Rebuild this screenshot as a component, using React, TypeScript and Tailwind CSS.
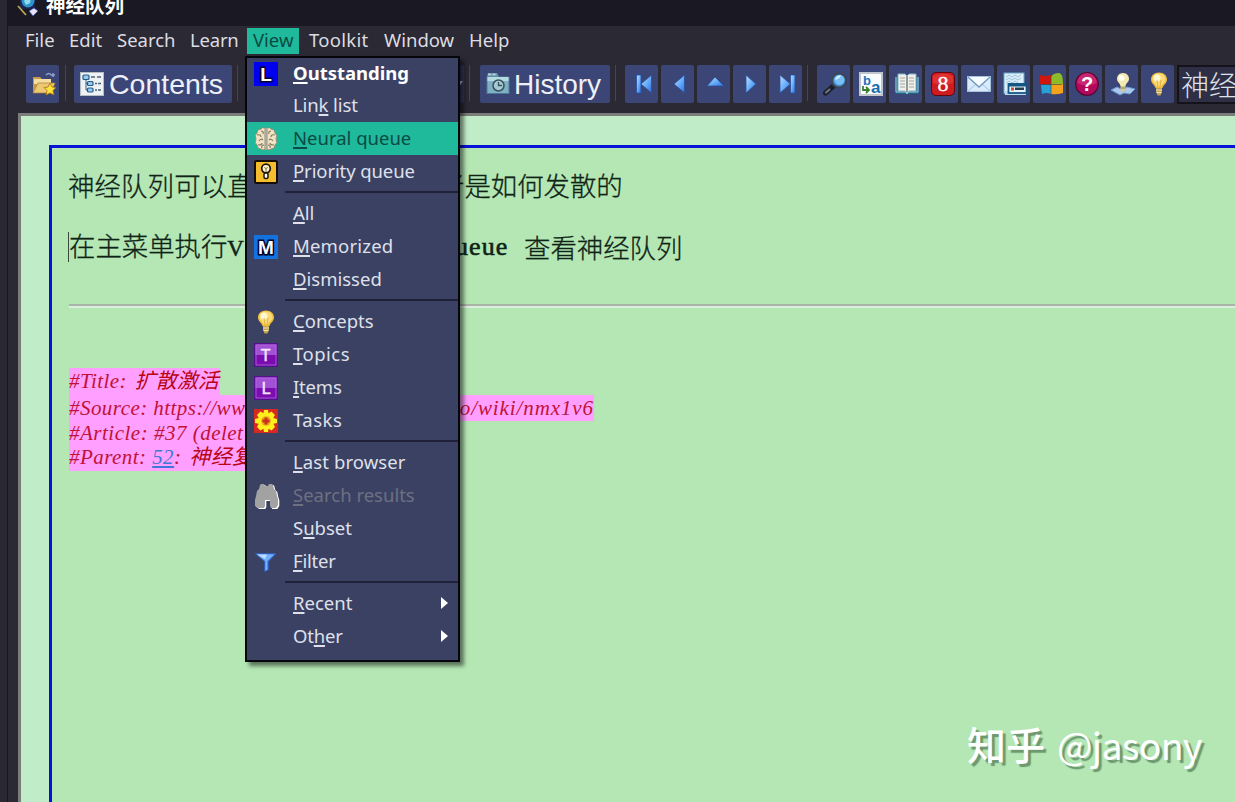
import type { ReactNode } from "react";

const UI = "font-['Noto_Sans','Open_Sans',sans-serif]";
const CJK = "font-['Noto_Sans_CJK_SC',sans-serif]";

function Svg({ children, size = "size-6" }: { children: ReactNode; size?: string }) {
  return (
    <svg viewBox="0 0 24 24" className={`${size} block shrink-0`}>
      {children}
    </svg>
  );
}

const Bulb = () => (
  <Svg>
    <path d="M12 .5C7 .5 4 3.500 4 7.500c0 4 3.500 5 4.500 8.500h7c1-3.500 4.500-4.500 4.500-8.500 0-4-3-7-8-7z" fill="#f0bc3e" />
    <path d="M12 1.500C8 1.500 5.500 4 5.500 7.500c0 3 3 4 4 7h4.500c1-3 4.500-4 4.500-7s-2.500-6-6.500-6z" fill="#fadb78" />
    <circle cx="10" cy="6" r="3.500" fill="#fff8cf" />
    <path d="M10 8l1 7M14 8l-1 7" stroke="#e0a834" strokeWidth=".8" fill="none" />
    <path d="M9 16h6v4l-1.500 3.500h-3L9 20z" fill="#c4a24e" />
    <path d="M9 18h6M9.500 20.500h5" stroke="#ece5bd" />
  </Svg>
);

const Folder = () => (
  <Svg>
    <path d="M1 5h7l2 2h9v14H1z" fill="#c79b48" />
    <path d="M2 7h17v5H2z" fill="#f5dfa0" />
    <path d="M6 11h17l-4 10H1z" fill="#edc873" stroke="#a97b32" strokeWidth=".7" />
    <path d="M14 3q3-3 5 0M19 3h4M21 1v4" stroke="#8fa2cf" strokeWidth="1.500" fill="none" />
    <path d="M18 11l2 4 4 .5-3 3 1 4.500-4-2-4 2 1-4.500-3-3 4-.5z" fill="#ffe23b" stroke="#a56d11" strokeWidth=".8" />
  </Svg>
);

const Tree = () => (
  <Svg>
    <rect x=".5" y=".5" width="23" height="23" fill="#eef2f5" stroke="#b4bcc5" />
    <path d="M6 5v13M6 11.500h4M6 18h4" stroke="#315f87" fill="none" />
    <g fill="#9cc9e9" stroke="#205b8d" strokeWidth="1.200">
      <rect x="3" y="3" width="6" height="4.500" rx="1" />
      <rect x="7.500" y="9.500" width="5.500" height="4" rx="1" />
      <rect x="7.500" y="16" width="5.500" height="4" rx="1" />
    </g>
    <path d="M11 5h4m2 0h4M15 11.500h2m1 0h3M15 18h2m1 0h3" stroke="#4e6473" strokeWidth="1.600" />
  </Svg>
);

const HistoryIcon = () => (
  <Svg>
    <path d="M1 5l1-4h9l2 4z" fill="#7399ae" />
    <path d="M2 2.500h9" stroke="#b5d5dd" strokeWidth="1.500" strokeDasharray="3 1.500" />
    <rect x="1" y="5" width="22" height="16.500" fill="#7fb0c4" stroke="#4c7b95" />
    <path d="M1.500 5h21v4h-21z" fill="#b5dbe0" />
    <circle cx="12.500" cy="13.500" r="5.500" fill="#a4cbd4" stroke="#38505e" strokeWidth="1.500" />
    <path d="M12.500 10v3.500H16" stroke="#38505e" strokeWidth="1.300" fill="none" />
  </Svg>
);

function Nav({ kind }: { kind: string }) {
  return (
    <Svg>
      <defs>
        <linearGradient id="navBlue" x1="0" y1="0" x2="1" y2="1">
          <stop offset="0" stopColor="#bfe2ff" />
          <stop offset=".5" stopColor="#6cb0fa" />
          <stop offset="1" stopColor="#2c6fdc" />
        </linearGradient>
      </defs>
      <g fill="url(#navBlue)" stroke="#284f9d" strokeWidth=".8">
        {kind === "first" && <><rect x="5.500" y="3" width="4.500" height="18" /><path d="M20.500 3v18L10 12z" /></>}
        {kind === "prev" && <path d="M17.500 3v18L7 12z" />}
        {kind === "up" && <path d="M4 14l8-9 9 9z" />}
        {kind === "next" && <path d="M7 3v18l10-9z" />}
        {kind === "last" && <><path d="M5 3v18l10.500-9z" /><rect x="15.500" y="3" width="4.500" height="18" /></>}
      </g>
    </Svg>
  );
}

const Magnifier = () => (
  <Svg>
    <path d="M2.500 21l8-7" stroke="#1b2028" strokeWidth="5" strokeLinecap="round" />
    <path d="M3 20.500l3.500-3" stroke="#707884" strokeWidth="2" strokeLinecap="round" />
    <circle cx="16" cy="8.500" r="7" fill="#4590d8" stroke="#3b4656" strokeWidth="2" />
    <circle cx="16.500" cy="8" r="5" fill="#77bff4" />
    <path d="M12 8q0-4 6-5-1 4-6 5z" fill="#d3efff" />
  </Svg>
);

const Translate = () => (
  <Svg>
    <rect x="1" y="1" width="22" height="22" fill="#f9fbfd" stroke="#bfc4cd" strokeWidth="2" />
    <text x="4" y="12.500" fill="#2475b7" fontSize="13" fontWeight="700" fontFamily="Liberation Sans">b</text>
    <text x="12" y="21" fill="#176fae" fontSize="17" fontWeight="700" fontFamily="Liberation Sans">a</text>
    <path d="M4 14v4h5m-2-3l3 3-3 3" stroke="#397f30" strokeWidth="1.800" fill="none" />
  </Svg>
);

const Book = () => (
  <Svg>
    <path d="M0 5h24v17H0z" fill="#226486" />
    <path d="M3 2h7l2 2 2-2h7v17h-7l-2 2-2-2H3z" fill="#f1f0e8" stroke="#83b4cc" />
    <path d="M12 4v16" stroke="#5f6a70" strokeWidth="1.300" />
    <path d="M5 6h5M5 9h5M5 12h5M5 15h5M14 6h5M14 9h5M14 12h5M14 15h5" stroke="#a0a6a8" />
    <path d="M1 5v15h10l1 2 1-2h10V5" fill="none" stroke="#a1d0e0" />
  </Svg>
);

const Google = () => (
  <Svg>
    <rect x=".5" y=".5" width="23" height="23" rx="4.500" fill="#cd1b20" stroke="#63050b" />
    <path d="M2 4q10-5 20 0v7q-10 4-20 0z" fill="#e8433d" opacity=".6" />
    <text x="12" y="19" textAnchor="middle" fill="#fff" stroke="#fff" strokeWidth=".3" fontSize="22" fontFamily="'Liberation Serif', serif">8</text>
  </Svg>
);

const Mail = () => (
  <Svg>
    <rect x=".5" y="4.500" width="23" height="15" fill="#d9eafa" stroke="#a5c3e0" />
    <path d="M1 19l8-7M23 19l-8-7" stroke="#9fc2e2" />
    <path d="M1 5l11 10L23 5" fill="#f6fbff" stroke="#7199c1" strokeWidth="1.300" />
  </Svg>
);

const SplitWindow = () => (
  <Svg>
    <rect x="1" y="1" width="20" height="20" fill="#dceef7" stroke="#69a7cc" />
    <path d="M3 5l3-2 3 2 3-2 3 2 3-2M3 8l3-2 3 2 3-2 3 2 3-2M3 11l3-2 3 2 3-2 3 2" stroke="#8dbddb" strokeWidth=".9" fill="none" />
    <path d="M1 19h22v4H2z" fill="#b5d9ea" />
    <rect x="5.500" y="12" width="18" height="9" fill="#e8f3f8" stroke="#145785" strokeWidth="1.800" />
    <path d="M5.500 11h18v3.500h-18z" fill="#145785" />
    <path d="M8 15.500h3v3H8z" fill="#d04b38" />
    <path d="M12 15.500h9V18h-9z" fill="#263d52" />
  </Svg>
);

const Office = () => (
  <Svg>
    <path d="M1 3q5 2 11 0v9H1z" fill="#d3150f" />
    <path d="M12 5q2-4 8-4 4 0 4 11H12z" fill="#8cba28" />
    <path d="M2 13h10v9q-5-2-9 0z" fill="#26a2d6" />
    <path d="M12 12h12v9q-6 2-12 1z" fill="#f2a31b" />
    <path d="M12 4v18M2 12.500h21" stroke="#4c4e3f" strokeWidth=".7" />
  </Svg>
);

const Help = () => (
  <Svg>
    <circle cx="12" cy="12" r="11.300" fill="#b3085c" stroke="#570730" strokeWidth="1.300" />
    <path d="M2 11a10 10 0 0120 0q-10 5-20 0z" fill="#d7397f" opacity=".6" />
    <text x="12" y="19" textAnchor="middle" fill="#fff" fontSize="20" fontWeight="700" fontFamily="Liberation Sans">?</text>
  </Svg>
);

const BulbPaper = () => (
  <Svg>
    <path d="M0 18l6-3 4 2 6-2 8 2-5 5-6-1-4 2z" fill="#aac9ed" stroke="#6698cd" />
    <path d="M12 1C8 1 6 4 6 7s3 4 3.500 7h5C15 11 18 10 18 7s-2-6-6-6z" fill="#f2eab0" />
    <circle cx="10.500" cy="6" r="3" fill="#fffef0" />
    <path d="M9.500 14h5v4l-2 2h-1.500l-1.500-2z" fill="#d3c997" />
    <path d="M10 16h5" stroke="#968a55" />
  </Svg>
);

function LetterTile({ letter, kind }: { letter: string; kind: "blue" | "sky" | "violet" }) {
  const fill = kind === "blue" ? "#0000f0" : kind === "sky" ? "#1472df" : "#8c28c8";
  return (
    <Svg>
      <rect width="24" height="24" fill={fill} />
      {kind === "violet" && (
        <>
          <path d="M1 1h22v11H1z" fill="#a250d4" />
          <path d="M1 12h22v11H1z" fill="#7a0cb0" />
          <rect x=".7" y=".7" width="22.600" height="22.600" fill="none" stroke="#54118d" strokeWidth="1.400" />
          <rect x="2" y="2" width="20" height="20" fill="none" stroke="#b968e0" strokeWidth=".8" />
        </>
      )}
      <text
        x="12"
        y={kind === "violet" ? 17.5 : 18.5}
        textAnchor="middle"
        fontSize={kind === "violet" ? 16 : 19}
        fontWeight={kind === "violet" ? 400 : 700}
        fontFamily="Liberation Sans"
        fill={kind === "violet" ? "#f5e4ff" : "#fff"}
        stroke={kind === "violet" ? "#f5e4ff" : "#00002c"}
        strokeWidth={kind === "violet" ? 0.5 : 3}
        paintOrder="stroke"
      >
        {letter}
      </text>
    </Svg>
  );
}

const Brain = () => (
  <Svg>
    <path d="M11 1q-3-1-4 1-4 0-4 4-3 2-1 6-2 4 1 6 0 4 4 4 2 2 4 0z" fill="#f0e3c5" stroke="#8a8066" strokeWidth=".8" />
    <path d="M13 1q3-1 4 1 4 0 4 4 3 2 1 6 2 4-1 6 0 4-4 4-2 2-4 0z" fill="#f0e3c5" stroke="#8a8066" strokeWidth=".8" />
    <path d="M12 1v22" stroke="#a9a69d" strokeWidth="2.400" />
    <path d="M7 4q3 0 2 3M3 8q4-1 4 2M5 14q2-3 4-1M4 18q4 0 4-2M8 21q-1-3 2-3M17 4q-3 0-2 3M21 8q-4-1-4 2M19 14q-2-3-4-1M20 18q-4 0-4-2M16 21q1-3-2-3" stroke="#857a60" strokeWidth="1.200" fill="none" />
  </Svg>
);

const Priority = () => (
  <Svg>
    <rect x="1" y="1" width="22" height="22" rx="1.500" fill="#f5bd2c" stroke="#130c08" strokeWidth="2" />
    <circle cx="12" cy="8.500" r="4.300" fill="#fff2c8" stroke="#1b1710" strokeWidth="1.700" />
    <path d="M10.500 7l1.500 2.500L13.500 7M12 9.500v3" stroke="#6b5d38" strokeWidth=".8" fill="none" />
    <rect x="10" y="13" width="4" height="5.500" rx="1.500" fill="#fff" stroke="#1b1710" strokeWidth="1.500" />
  </Svg>
);

const Tasks = () => (
  <Svg>
    <rect width="24" height="24" fill="#d52a22" />
    <path d="M10 1h4l.6 3.200L17.500 2.500l3.500 3.500-1.700 2.900L23 10v4l-3.500.7L21 18l-3.500 3.500-2.900-1.700L14 23h-4l-.6-3.200L6.500 21.500 3 18l1.700-3.300L1 14v-4l3.700-.9L3 6l3.500-3.500 2.900 1.700z" fill="#fdf01c" />
    <circle cx="12" cy="12" r="4.800" fill="#f0a51c" />
    <path d="M12 8.500v7M8.500 12h7" stroke="#c7331d" strokeWidth="3" />
  </Svg>
);

const Binoculars = () => {
  const shape = "M6 2l1-1h3l1 2h3l1-2h3l1 1 1 4 2 2 1 5 1 3v6l-2 3h-5l-1-2v-6h-5v6l-1 2H4l-3-2v-6l1-4 1-5 2-2z";
  return (
    <svg viewBox="0 0 26 26" className="block size-[26px] shrink-0">
      <path d={shape} fill="#fff" transform="translate(1.300 1)" />
      <path d={shape} fill="#a2a2a2" />
    </svg>
  );
};

const Funnel = () => (
  <Svg>
    <path d="M1 3.500h21l-7.500 8V20l-4 1.500v-10z" fill="#4c86e2" stroke="#2a59b7" strokeWidth=".7" />
    <path d="M3 4.500h17L13 11v9l-1.500.5V11z" fill="#75b2fc" />
    <path d="M3 4.500h10L11 9z" fill="#b9dcff" />
  </Svg>
);

const AppIcon = () => (
  <svg viewBox="0 0 22 22" className="block size-[22px] shrink-0">
    <rect x="3" y="0" width="15" height="14" fill="#1c2450" />
    <circle cx="11" cy="6" r="6.500" fill="#2f94cb" />
    <path d="M7 6q3-4 7-3l-1 5-4 2z" fill="#8fdae8" />
    <path d="M1 11l8 9" stroke="#b9a655" strokeWidth="1.800" />
    <path d="M12 16l5-3 4 3-5 5z" fill="#e9e3f3" stroke="#2b4cc0" strokeWidth=".7" />
  </svg>
);

function Tool({ children }: { children: ReactNode }) {
  return (
    <div className="flex h-[38px] w-[33px] shrink-0 items-center justify-center rounded-[2px] bg-[#3c4676] pl-[2px]">
      {children}
    </div>
  );
}

const Divider = ({ className }: { className: string }) => (
  <div className={`h-[36px] w-px shrink-0 bg-[#45435a] ${className}`} />
);

const menus = [
  { label: "File", css: "w-11" },
  { label: "Edit", css: "w-12" },
  { label: "Search", css: "w-[73px]" },
  { label: "Learn", css: "w-[57px] tracking-[-0.2px]" },
  { label: "View", css: "mr-[10px] w-[52px] bg-[#1eba9b] pl-[6px] text-[#0c4a45]" },
  { label: "Toolkit", css: "w-[75px] tracking-[0.3px]" },
  { label: "Window", css: "w-[85px]" },
  { label: "Help", css: "w-[50px]" },
];

type Entry = {
  text: string;
  hot?: number;
  icon?: ReactNode;
  css?: string;
  arrow?: boolean;
};

const groups: Entry[][] = [
  [
    { text: "Outstanding", hot: 0, icon: <LetterTile letter="L" kind="blue" />, css: "h-[31px] font-bold text-white" },
    { text: "Link list", hot: 3, css: "h-[33px] text-[#dfe0ea] tracking-[-0.1px]" },
    { text: "Neural queue", hot: 0, icon: <Brain />, css: "h-[33px] bg-[#1eba9b] text-[#0c4a45]" },
    { text: "Priority queue", hot: 0, icon: <Priority />, css: "h-[33px] tracking-[-0.1px] text-[#dfe0ea]" },
  ],
  [
    { text: "All", hot: 0 },
    { text: "Memorized", hot: 0, icon: <LetterTile letter="M" kind="sky" />, css: "h-[33px] tracking-[0.2px] text-[#dfe0ea]" },
    { text: "Dismissed", hot: 0 },
  ],
  [
    { text: "Concepts", hot: 0, icon: <Bulb /> },
    { text: "Topics", hot: 0, icon: <LetterTile letter="T" kind="violet" />, css: "h-[33px] tracking-[0.5px] text-[#dfe0ea]" },
    { text: "Items", hot: 0, icon: <LetterTile letter="L" kind="violet" />, css: "h-[33px] tracking-[-0.2px] text-[#dfe0ea]" },
    { text: "Tasks", icon: <Tasks />, css: "h-[33px] tracking-[0.5px] text-[#dfe0ea]" },
  ],
  [
    { text: "Last browser", hot: 0, css: "h-[33px] tracking-[0.1px] text-[#dfe0ea]" },
    { text: "Search results", hot: 0, icon: <Binoculars />, css: "h-[33px] text-[#6d7081]" },
    { text: "Subset", hot: 1 },
    { text: "Filter", hot: 0, icon: <Funnel />, css: "h-[33px] tracking-[-0.2px] text-[#dfe0ea]" },
  ],
  [
    { text: "Recent", hot: 0, arrow: true },
    { text: "Other", hot: 2, arrow: true, css: "h-[33px] tracking-[-0.2px] text-[#dfe0ea]" },
  ],
];

function MenuRow({ text, hot, icon, css, arrow }: Entry) {
  return (
    <div className={`flex items-center ${css ?? "h-[33px] text-[#dfe0ea]"}`}>
      <div className="flex w-[46px] shrink-0 pl-[7px]">{icon}</div>
      <div className="-mt-[2px] flex-1 whitespace-pre leading-[26px]">
        {hot === undefined ? text : (
          <>
            {text.slice(0, hot)}
            <span className="underline decoration-[1.5px] underline-offset-[2px]">{text[hot]}</span>
            {text.slice(hot + 1)}
          </>
        )}
      </div>
      {arrow && (
        <svg viewBox="0 0 7 12" className="mr-[10px] -mt-[2px] h-3 w-[7px]">
          <path d="M0 0l7 6-7 6z" fill="#fff" />
        </svg>
      )}
    </div>
  );
}

function ViewMenu() {
  return (
    <div className={`absolute left-[245px] top-[56px] h-[606px] w-[215px] border-2 border-[#05050c] bg-[#3b4163] text-[18.500px] shadow-[4px_4px_4px_rgba(0,0,0,0.5)] ${UI}`}>
      {groups.map((group, i) => (
        <div key={i}>
          {i > 0 && (
            <div className="flex h-[9px] pl-[38px] pt-[3px]">
              <div className="h-[1.500px] flex-1 bg-[#20223a]" />
            </div>
          )}
          {group.map((entry) => (
            <MenuRow key={entry.text} {...entry} />
          ))}
        </div>
      ))}
    </div>
  );
}

export default function App() {
  return (
    <div className="relative flex h-[802px] w-[1235px] overflow-hidden bg-[#2b2934]">
      <div className="w-2 shrink-0 border-r border-[#191822] bg-[#292834]" />
      <div className="flex min-w-0 flex-1 flex-col">
        <header className="flex h-[26px] shrink-0 items-start overflow-hidden bg-[#1a1923] pl-[9px]">
          <div className="-mt-[5px]"><AppIcon /></div>
          <div className={`-mt-[9px] ml-[7px] text-[19.500px] font-bold leading-[28px] text-white ${CJK}`}>神经队列</div>
        </header>

        <nav className={`flex h-[30px] shrink-0 items-start pl-[17px] pt-[2px] text-[18.500px] text-[#dddce2] ${UI}`}>
          {menus.map((m) => (
            <div key={m.label} className={`h-[26px] shrink-0 whitespace-nowrap leading-[24px] ${m.css}`}>
              {m.label}
            </div>
          ))}
        </nav>

        <div className="flex h-[57px] shrink-0 items-start overflow-hidden pl-[18px] pt-[9px]">
          <Tool><Folder /></Tool>
          <Divider className="ml-[6px] mr-[8px]" />
          <div className="flex h-[38px] w-[158px] shrink-0 items-center rounded-[2px] bg-[#3c4676] pl-[6px] font-['Liberation_Sans',sans-serif] text-[28.500px] text-[#eef0f8]">
            <Tree />
            <span className="ml-[5px] leading-[38px]">Contents</span>
          </div>
          <Divider className="ml-[5px] mr-[10px]" />
          <div className="flex h-[38px] w-[216px] shrink-0 items-center justify-end rounded-[2px] bg-[#34385c]">
            <svg viewBox="0 0 8 8" className="mr-px size-2"><path d="M0 1h8L4 7z" fill="#b9bdca" /></svg>
          </div>
          <Divider className="ml-[5px] mr-[10px]" />
          <div className="flex h-[38px] w-[130px] shrink-0 items-center rounded-[2px] bg-[#3c4676] pl-[6px] font-['Liberation_Sans',sans-serif] text-[28px] text-[#eef0f8]">
            <HistoryIcon />
            <span className="ml-[4px] mt-px leading-[38px]">History</span>
          </div>
          <Divider className="ml-[5px] mr-[9px]" />
          <div className="flex gap-[3px]">
            <Tool><Nav kind="first" /></Tool>
            <Tool><Nav kind="prev" /></Tool>
            <Tool><Nav kind="up" /></Tool>
            <Tool><Nav kind="next" /></Tool>
            <Tool><Nav kind="last" /></Tool>
          </div>
          <Divider className="ml-[5px] mr-[9px]" />
          <div className="flex gap-[3px]">
            <Tool><Magnifier /></Tool>
            <Tool><Translate /></Tool>
            <Tool><Book /></Tool>
            <Tool><Google /></Tool>
            <Tool><Mail /></Tool>
            <Tool><SplitWindow /></Tool>
            <Tool><Office /></Tool>
            <Tool><Help /></Tool>
            <Tool><BulbPaper /></Tool>
            <Tool><Bulb /></Tool>
          </div>
          <div className={`ml-[3px] h-[39px] w-[90px] shrink-0 overflow-hidden whitespace-nowrap border-2 border-[#14131c] bg-[#2e2f45] pl-[2px] text-[28px] font-light leading-[34px] text-[#dfe1ea] ${CJK}`}>
            神经队列
          </div>
        </div>

        <main className="ml-[10px] flex min-h-0 flex-1 border-l-[3px] border-t-[3px] border-[#7b7d7b] bg-[#c0edc8] pl-[28px] pt-[29px]">
          <div className="flex flex-1 flex-col border-l-[3px] border-t-[3px] border-[#0714d8] bg-[#b5e7b5] pl-[16px]">
            <div className={`mt-[17px] flex h-[40px] shrink-0 whitespace-nowrap text-[26.400px] font-light leading-[40px] text-[#0f2316] [-webkit-text-stroke:0.3px] ${CJK}`}>
              <div className="w-[370px] shrink-0 tracking-[0.150px]">神经队列可以直</div>
              <div>者是如何发散的</div>
            </div>
            <div className={`mt-[22px] flex h-[40px] shrink-0 items-center whitespace-nowrap text-[26.400px] font-light leading-[40px] text-[#0f2316] [-webkit-text-stroke:0.3px] ${CJK}`}>
              <div className="h-[30px] w-px bg-[#3b4a3d]" />
              <div className="w-[386px] shrink-0">
                在主菜单执行<b className="font-['Liberation_Serif',serif] text-[23px] [-webkit-text-stroke:0.5px]">V</b>
              </div>
              <b className="w-[69px] font-['Liberation_Serif',serif] text-[26px] tracking-[1.100px] [-webkit-text-stroke:0.6px]">ueue</b>
              <div>查看神经队列</div>
            </div>
            <div className="ml-px mt-[37px] h-[4px] shrink-0 border-b-2 border-t-2 border-b-[#dcefdc] border-t-[#a9b5a9]" />
            <div className="ml-px mt-[60px] flex flex-col items-start whitespace-nowrap font-['Liberation_Serif','Noto_Sans_CJK_SC',serif] text-[21px] italic leading-[24px] tracking-[0.450px] text-[#c01238]">
              <div className="h-[27px] w-[151px] bg-[#ff9fff] leading-[26px]">#Title: <span className="ml-[2px] tracking-normal text-[#b80414]">扩散激活</span></div>
              <div className="flex h-[26px] w-[525px] justify-between bg-[#ff9fff] leading-[26px]">
                <span>#Source: https://ww</span>
                <span className="tracking-[0.900px]">o/wiki/nmx1v6</span>
              </div>
              <div className="h-[24px] w-[190px] bg-[#ff9fff]"><span className="tracking-[0.500px]">#Article: #37 (delet</span></div>
              <div className="h-[26px] w-[190px] overflow-hidden bg-[#ff9fff]">
                #Parent: <span className="text-[#3c78d8] underline">52</span>: <span className="ml-[2px] text-[#b80414]">神经复</span>
              </div>
            </div>
          </div>
        </main>
      </div>

      <ViewMenu />

      <div className="absolute left-[967px] top-[716px] flex items-baseline whitespace-nowrap text-[37.500px] leading-[54px] text-white [text-shadow:3px_3px_1px_rgba(85,125,88,0.75)] font-['Noto_Sans_CJK_SC',sans-serif]">
        <span className="w-[90px] text-[39px] font-medium">知乎</span>
        <span className="tracking-[-0.700px]">@jasony</span>
      </div>
    </div>
  );
}
